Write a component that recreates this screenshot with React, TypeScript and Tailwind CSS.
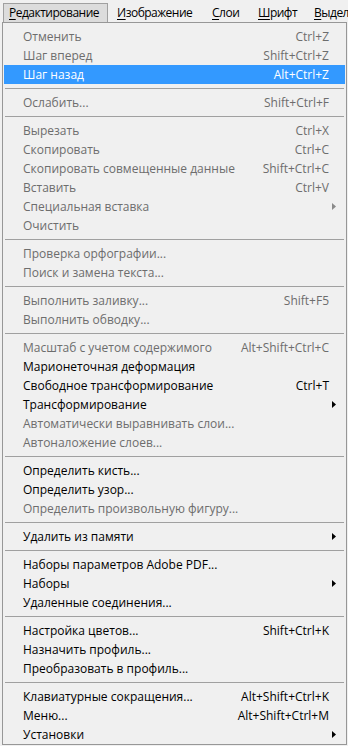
import React from "react";

type Item = {
  label: string;
  shortcut?: string;
  disabled?: boolean;
  sub?: boolean;
  active?: boolean;
};

type Entry = Item | "sep";

const entries: Entry[] = [
  { label: "Отменить", shortcut: "Ctrl+Z", disabled: true },
  { label: "Шаг вперед", shortcut: "Shift+Ctrl+Z", disabled: true },
  { label: "Шаг назад", shortcut: "Alt+Ctrl+Z", active: true },
  "sep",
  { label: "Ослабить...", shortcut: "Shift+Ctrl+F", disabled: true },
  "sep",
  { label: "Вырезать", shortcut: "Ctrl+X", disabled: true },
  { label: "Скопировать", shortcut: "Ctrl+C", disabled: true },
  { label: "Скопировать совмещенные данные", shortcut: "Shift+Ctrl+C", disabled: true },
  { label: "Вставить", shortcut: "Ctrl+V", disabled: true },
  { label: "Специальная вставка", disabled: true, sub: true },
  { label: "Очистить", disabled: true },
  "sep",
  { label: "Проверка орфографии...", disabled: true },
  { label: "Поиск и замена текста...", disabled: true },
  "sep",
  { label: "Выполнить заливку...", shortcut: "Shift+F5", disabled: true },
  { label: "Выполнить обводку...", disabled: true },
  "sep",
  { label: "Масштаб с учетом содержимого", shortcut: "Alt+Shift+Ctrl+C", disabled: true },
  { label: "Марионеточная деформация" },
  { label: "Свободное трансформирование", shortcut: "Ctrl+T" },
  { label: "Трансформирование", sub: true },
  { label: "Автоматически выравнивать слои...", disabled: true },
  { label: "Автоналожение слоев...", disabled: true },
  "sep",
  { label: "Определить кисть..." },
  { label: "Определить узор..." },
  { label: "Определить произвольную фигуру...", disabled: true },
  "sep",
  { label: "Удалить из памяти", sub: true },
  "sep",
  { label: "Наборы параметров Adobe PDF..." },
  { label: "Наборы", sub: true },
  { label: "Удаленные соединения..." },
  "sep",
  { label: "Настройка цветов...", shortcut: "Shift+Ctrl+K" },
  { label: "Назначить профиль..." },
  { label: "Преобразовать в профиль..." },
  "sep",
  { label: "Клавиатурные сокращения...", shortcut: "Alt+Shift+Ctrl+K" },
  { label: "Меню...", shortcut: "Alt+Shift+Ctrl+M" },
  { label: "Установки", sub: true },
];

function Arrow({ grey }: { grey?: boolean }) {
  return (
    <svg width="4" height="7" viewBox="0 0 4 7" className="absolute right-[9px] top-[6px]">
      <path d="M0 0 L4 3.5 L0 7 Z" fill={grey ? "#8a8a8a" : "#000"} />
    </svg>
  );
}

function Row({ item }: { item: Item }) {
  const color = item.active ? "text-white" : item.disabled ? "text-[#6d6d6d]" : "text-black";
  return (
    <div
      className={`relative h-[19px] mx-[1px] flex items-center pl-[19px] pr-[16px] ${color} ${
        item.active ? "bg-[#3399ff]" : ""
      }`}
    >
      <span className="flex-1 whitespace-nowrap">{item.label}</span>
      {item.shortcut && <span className="whitespace-nowrap">{item.shortcut}</span>}
      {item.sub && <Arrow grey={item.disabled} />}
    </div>
  );
}

function Mnemonic({ text }: { text: string }) {
  return (
    <>
      <span className="underline underline-offset-2">{text[0]}</span>
      {text.slice(1)}
    </>
  );
}

export default function App() {
  return (
    <div
      className="w-[348px] h-[746px] overflow-hidden bg-[#f0f0f0] text-[12px] leading-none"
      style={{ fontFamily: '"Open Sans", "Noto Sans", sans-serif' }}
    >
      {/* menu bar */}
      <div className="h-[22px] flex items-end text-black whitespace-nowrap tracking-[-0.5px] overflow-hidden">
        <div className="shrink-0 ml-[3px] w-[105px] h-[19px] border border-b-0 border-[#a0a0a0] bg-[#dcdcdc] pl-[5px] flex items-center">
          <Mnemonic text="Редактирование" />
        </div>
        <div className="shrink-0 ml-[9px] w-[95px] h-[19px] flex items-center">
          <Mnemonic text="Изображение" />
        </div>
        <div className="shrink-0 w-[46px] h-[19px] flex items-center">
          <Mnemonic text="Слои" />
        </div>
        <div className="shrink-0 w-[56px] h-[19px] flex items-center">
          <Mnemonic text="Шрифт" />
        </div>
        <div className="shrink-0 h-[19px] flex items-center">
          <Mnemonic text="Выделение" />
        </div>
      </div>

      {/* dropdown */}
      <div className="ml-[2px] w-[345px] border border-[#979797] bg-[#f0f0f0] pt-[4px]">
        {entries.map((e, i) =>
          e === "sep" ? (
            <div key={i} className="h-[9px] flex items-center px-[2px]">
              <div className="h-px w-full bg-[#a0a0a0]" />
            </div>
          ) : (
            <Row key={i} item={e} />
          )
        )}
      </div>
    </div>
  );
}
